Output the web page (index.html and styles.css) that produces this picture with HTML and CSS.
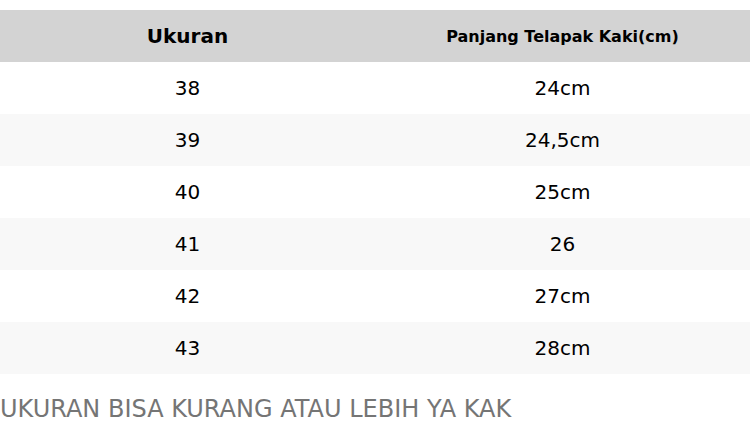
FILE: index.html
```html
<!DOCTYPE html>
<html>
<head>
<meta charset="utf-8">
<link rel="stylesheet" href="styles.css">
</head>
<body>
<div class="page">
  <table class="size-table">
    <thead>
      <tr>
        <th class="h-main">Ukuran</th>
        <th class="h-sub">Panjang Telapak Kaki(cm)</th>
      </tr>
    </thead>
    <tbody>
      <tr><td>38</td><td>24cm</td></tr>
      <tr><td>39</td><td>24,5cm</td></tr>
      <tr><td>40</td><td>25cm</td></tr>
      <tr><td>41</td><td>26</td></tr>
      <tr><td>42</td><td>27cm</td></tr>
      <tr><td>43</td><td>28cm</td></tr>
    </tbody>
  </table>
  <p class="note">UKURAN BISA KURANG ATAU LEBIH YA KAK</p>
</div>
</body>
</html>
```
FILE: styles.css
```css
html, body {
  margin: 0;
  padding: 0;
  background: #ffffff;
}
.page {
  padding-top: 10px;
  font-family: "DejaVu Sans", sans-serif;
  color: #000;
}
.size-table {
  width: 100%;
  border-collapse: collapse;
  table-layout: fixed;
}
.size-table th,
.size-table td {
  height: 52px;
  padding: 0;
  text-align: center;
  vertical-align: middle;
}
.size-table thead tr {
  background: #d3d3d3;
}
.h-main {
  font-size: 20px;
  font-weight: bold;
}
.h-sub {
  font-size: 16px;
  font-weight: bold;
}
.size-table td {
  font-size: 20px;
}
.size-table tbody tr:nth-child(even) {
  background: #f8f8f8;
}
.note {
  margin: 20px 0 0 0;
  font-size: 24px;
  color: #757575;
  line-height: 30px;
}
```
